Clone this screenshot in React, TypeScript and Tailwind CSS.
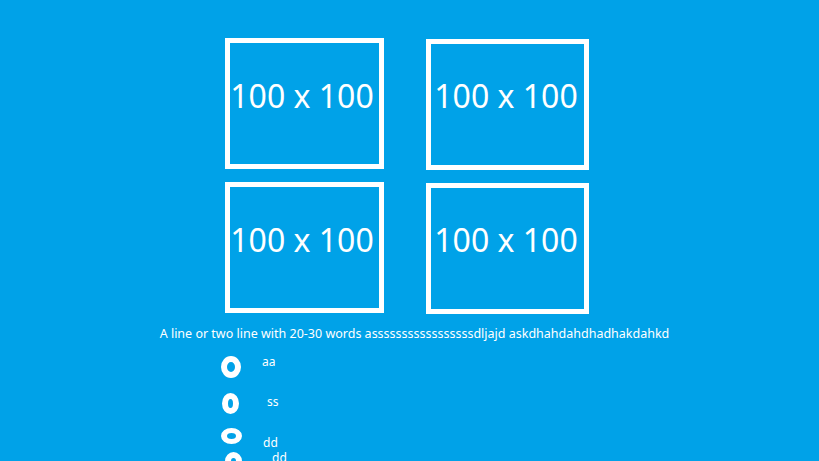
import React from 'react';

const boxes = [
  { id: 1, w: 'w-[159px]', pt: 'pt-[31px] pr-[5px]', mt: '' },
  { id: 2, w: 'w-[163px]', pt: 'pt-[30px] pr-[3px]', mt: 'mt-[1px]' },
  { id: 3, w: 'w-[159px]', pt: 'pt-[31px] pr-[5px]', mt: '' },
  { id: 4, w: 'w-[163px]', pt: 'pt-[30px] pr-[3px]', mt: 'mt-[1px]' },
];

function Ring({ className }: { className: string }) {
  return <span className={`block shrink-0 rounded-[50%] border-white ${className}`} />;
}

export default function App() {
  return (
    <div
      className="min-h-screen bg-[#00a2e8] text-white pt-[38px] overflow-hidden"
      style={{ fontFamily: '"Noto Sans", "Open Sans", sans-serif' }}
    >
      {/* Image placeholders */}
      <div className="ml-[225px] grid grid-cols-[159px_163px] gap-x-[42px] gap-y-[12px] w-fit">
        {boxes.map((b) => (
          <div
            key={b.id}
            className={`${b.w} ${b.mt} h-[131px] border-[5px] border-white ${b.pt} text-center text-[32px] leading-[1.362] whitespace-nowrap`}
          >
            100 x 100
          </div>
        ))}
      </div>

      {/* Caption */}
      <p className="mt-[11px] text-center text-[12.5px] leading-[17px] pl-[10px] whitespace-nowrap">
        A line or two line with 20-30 words asssssssssssssssssdljajd askdhahdahdhadhakdahkd
      </p>

      {/* Options */}
      <div className="mt-[11px] ml-[221px] flex flex-col text-[12px] leading-[17px]">
        <div className="flex items-start h-[40px]">
          <Ring className="w-[20px] h-[22px] mt-[3px] border-[6px]" />
          <span className="ml-[21px]">aa</span>
        </div>
        <div className="flex items-start h-[35px]">
          <Ring className="w-[17px] h-[21px] ml-[1px] border-[6px]" />
          <span className="ml-[28px]">ss</span>
        </div>
        <div className="flex items-start h-[21px]">
          <Ring className="w-[21px] h-[16px] border-[5px] border-x-[6px]" />
          <span className="ml-[21px] mt-[6px]">dd</span>
        </div>
        <div className="flex items-start h-[20px]">
          <Ring className="w-[17px] h-[18px] ml-[4px] mt-[3px] border-[6px]" />
          <span className="ml-[30px]">dd</span>
        </div>
      </div>
    </div>
  );
}
